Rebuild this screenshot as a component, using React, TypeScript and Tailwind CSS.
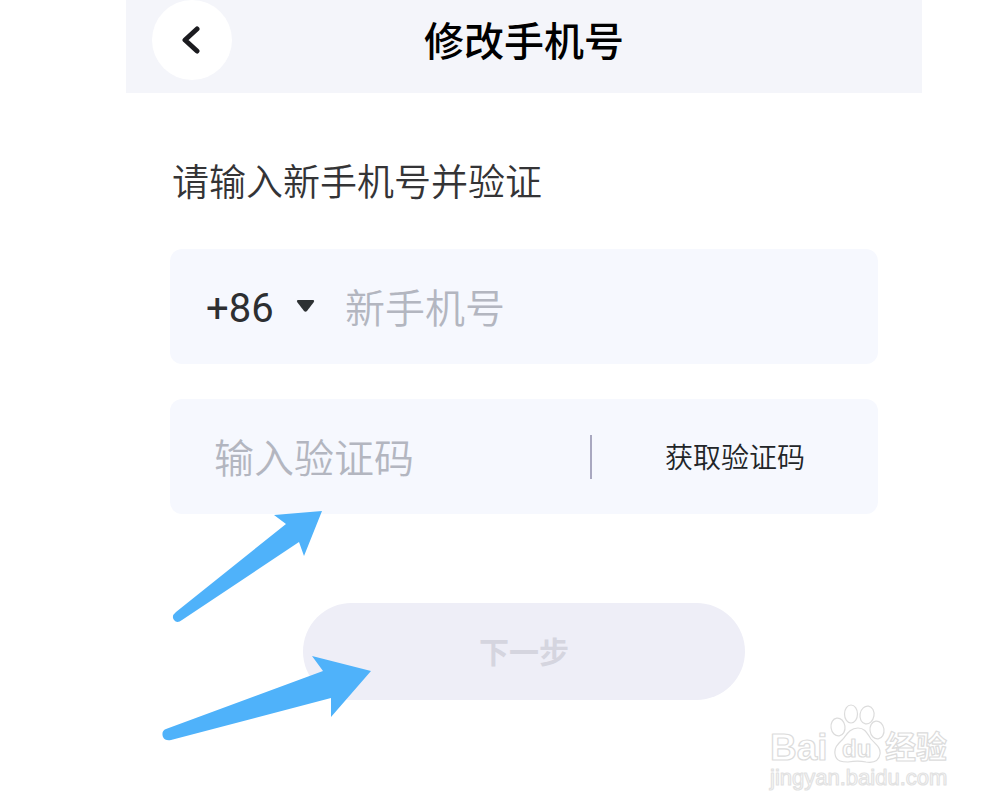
import { useState } from "react"

const COUNTRY_CODES = ["+86", "+852", "+853", "+886"]

function BackIcon() {
  return (
    <svg width="20" height="30" viewBox="0 0 20 30" fill="none" aria-hidden="true">
      <path d="M15 4 L3 15 L15 26" stroke="#1b1b1f" strokeWidth="5" strokeLinecap="round" strokeLinejoin="round" />
    </svg>
  )
}

function Watermark() {
  return (
    <svg
      width="188"
      height="92"
      viewBox="0 0 188 92"
      role="img"
      aria-label="Baidu 经验"
      fill="#ffffff"
      stroke="#dcdcdc"
      strokeWidth="1.2"
      strokeLinejoin="round"
      className="font-['Liberation_Sans','Noto_Sans_CJK_SC',sans-serif]"
    >
      {/* paw */}
      <ellipse cx="74" cy="23" rx="7" ry="9" transform="rotate(-8 74 23)" />
      <ellipse cx="87" cy="10" rx="6.5" ry="9" />
      <ellipse cx="103" cy="11" rx="7" ry="9" transform="rotate(10 103 11)" />
      <ellipse cx="113" cy="26" rx="7" ry="9" transform="rotate(-8 113 26)" />
      <path d="M94 24 C86 24 83 30 79 35 C74 40 70 43 71 50 C72 58 79 58 84 58 C90 57 97 57 102 58 C109 59 115 57 116 50 C117 43 111 40 107 35 C103 29 101 24 94 24 Z" />
      <text x="6" y="56" fontSize="37" fontWeight="700">
        Bai
      </text>
      <text x="78" y="53" fontSize="24" fontWeight="700">
        du
      </text>
      <text x="121" y="54" fontSize="31" fontWeight="700">
        经验
      </text>
      <text x="6" y="81" fontSize="22" stroke="#e2e2e2">
        jingyan.baidu.com
      </text>
    </svg>
  )
}

export default function App() {
  const [countryCode, setCountryCode] = useState("+86")
  const [phone, setPhone] = useState("")
  const [code, setCode] = useState("")

  return (
    <div className="bg-white font-['Roboto','Noto_Sans_CJK_SC',sans-serif]">
      <div className="pl-[126px] pr-[82px]">
        <header className="grid h-[93px] grid-cols-[80px_1fr_80px] items-start bg-[#f4f5fa] px-[26px]">
          <button type="button" aria-label="返回" className="flex size-20 items-center justify-center rounded-full bg-white">
            <BackIcon />
          </button>
          <h1 className="text-center text-[40px] leading-[86px] font-medium text-black">修改手机号</h1>
        </header>

        <form className="relative px-11 pt-16" onSubmit={(e) => e.preventDefault()}>
          <h2 className="px-0.5 text-[37px] leading-[54px] font-[350] text-[#343436]">请输入新手机号并验证</h2>

          <div className="mt-[38px] flex h-[115px] items-center rounded-xl bg-[#f6f8fe] pr-6 pl-9">
            <label className="flex shrink-0 items-center gap-5">
              <select
                aria-label="国家区号"
                value={countryCode}
                onChange={(e) => setCountryCode(e.target.value)}
                className="w-[70px] appearance-none bg-transparent pt-1 text-[40px] leading-[56px] text-[#2d2f31] outline-none"
              >
                {COUNTRY_CODES.map((item) => (
                  <option key={item} value={item}>
                    {item}
                  </option>
                ))}
              </select>
              <svg width="19" height="14" viewBox="0 0 18 14" aria-hidden="true">
                <path d="M1.5 0 H16.5 Q18.5 0.5 17 2.5 L10.5 11 Q9 12.5 7.5 11 L1 2.5 Q-0.5 0.5 1.5 0 Z" fill="#2d3133" />
              </svg>
            </label>
            <input
              type="tel"
              aria-label="新手机号"
              placeholder="新手机号"
              value={phone}
              onChange={(e) => setPhone(e.target.value)}
              className="ml-[30px] h-16 min-w-0 flex-1 bg-transparent pt-1.5 text-[40px] font-[350] text-[#2d2f31] outline-none placeholder:text-[#b3b6c0]"
            />
          </div>

          <div className="mt-[35px] flex h-[115px] items-center rounded-xl bg-[#f6f8fe] pl-11">
            <input
              type="text"
              inputMode="numeric"
              aria-label="输入验证码"
              placeholder="输入验证码"
              value={code}
              onChange={(e) => setCode(e.target.value)}
              className="h-16 min-w-0 flex-1 bg-transparent pt-1.5 text-[40px] font-[350] text-[#2d2f31] outline-none placeholder:text-[#b3b6c0]"
            />
            <button type="button" className="h-11 w-72 border-l-2 border-[#a9a8c0] pt-1 text-[28px] leading-10 font-[350] text-[#222528]">
              获取验证码
            </button>
          </div>

          <button
            type="submit"
            className="mx-auto mt-[89px] block h-[97px] w-[442px] max-w-full rounded-full bg-[#eeeef7] pt-0.5 text-[30px] font-bold text-[#d5d5df]"
          >
            下一步
          </button>

          {/* pointers to the code field and the next button */}
          <svg className="pointer-events-none absolute top-[417px] left-[46px]" width="152" height="114" viewBox="0 0 152 114" aria-hidden="true">
            <path d="M150 1 L132 46 L127 32 L10 110 Q5 114 2 110 Q-1 106 4 102 L114 14 L102 5 Z" fill="#4fb2fa" />
          </svg>
          <svg className="pointer-events-none absolute top-[562px] left-9" width="212" height="88" viewBox="0 0 212 88" aria-hidden="true">
            <path d="M209 16 L169 62 L169 43 L9 85 Q3 86 1 82 Q-1 76 4 74 L161 16 L150 1 Z" fill="#4fb2fa" />
          </svg>
        </form>
      </div>

      <footer className="mt-1 flex justify-end pr-[52px]">
        <Watermark />
      </footer>
    </div>
  )
}
